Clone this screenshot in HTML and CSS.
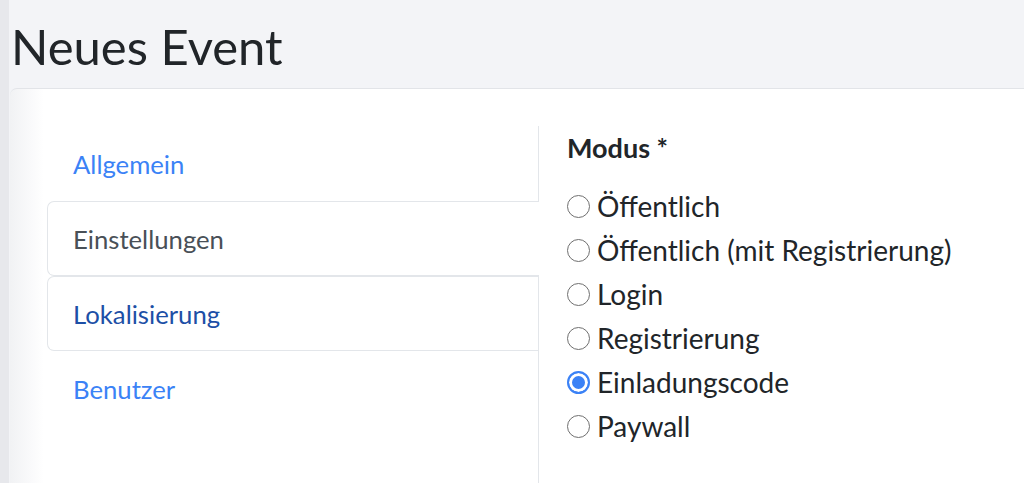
FILE: index.html
```html
<!DOCTYPE html>
<html lang="de">
<head>
  <meta charset="UTF-8" />
  <meta name="viewport" content="width=device-width, initial-scale=1.0"/>
  <title>Neues Event</title>
  <link rel="stylesheet" href="styles.css">
</head>

<body>
  <h1>Neues Event</h1>

  <div class="card">
    <nav class="tabs">
      <a href="#" class="tab">Allgemein</a>
      <a href="#" class="tab active">Einstellungen</a>
      <a href="#" class="tab hover">Lokalisierung</a>
      <a href="#" class="tab">Benutzer</a>
    </nav>

    <div class="pane">
      <div class="label">Modus *</div>
      <label class="option"><input type="radio" name="mode" /> Öffentlich</label>
      <label class="option"><input type="radio" name="mode" /> Öffentlich (mit Registrierung)</label>
      <label class="option"><input type="radio" name="mode" /> Login</label>
      <label class="option"><input type="radio" name="mode" /> Registrierung</label>
      <label class="option"><input type="radio" name="mode" checked /> Einladungscode</label>
      <label class="option"><input type="radio" name="mode" /> Paywall</label>
    </div>
  </div>
</body>
</html>
```

FILE: styles.css
```css
body { margin:0; font-family:'Lato','Noto Sans',sans-serif; color:#212529; height:483px; overflow:hidden;
  background:linear-gradient(to right, #e7e8ec 0, #e7e8ec 9px, #f3f4f7 9px); }
h1 { margin:0; padding:18px 0 0 11px; height:88px; box-sizing:border-box; font-weight:400; font-size:49px; line-height:56px; }
.card { margin-left:10px; height:395px; box-sizing:border-box; display:flex; border-top:1px solid #e2e4e8; border-radius:7px 0 0 0;
  background:linear-gradient(to right, #f1f2f4 0, #fbfbfc 24px, #fff 34px); padding-top:37px; }
.tabs { margin-left:37px; width:491px; border-right:1px solid #e3e6ea; display:flex; flex-direction:column; }
.tab { height:75px; flex-shrink:0; box-sizing:border-box; padding-left:25px; display:flex; align-items:center; font-size:25.7px;
  color:#3b82f6; text-decoration:none; border:1px solid transparent; border-right:none; border-radius:7px 0 0 7px; margin-right:-1px; }
.tab.active { color:#495057; background:#fff; border-color:#e3e6ea; }
.tab.hover { color:#1d4fa6; border-color:#e3e6ea; }
.pane { padding-left:28px; }
.label { font-weight:bold; font-size:27px; line-height:44px; margin-bottom:14px; }
.option { display:flex; align-items:center; height:44px; font-size:28px; gap:7px; }
.option input { appearance:none; margin:0; width:23px; height:23px; border:1.5px solid #6f6f6f; border-radius:50%; box-sizing:border-box; background:#fff; }
.option input:checked { border:2px solid #3b82f6; box-shadow:inset 0 0 0 3px #fff; background:#3b82f6; }
```
